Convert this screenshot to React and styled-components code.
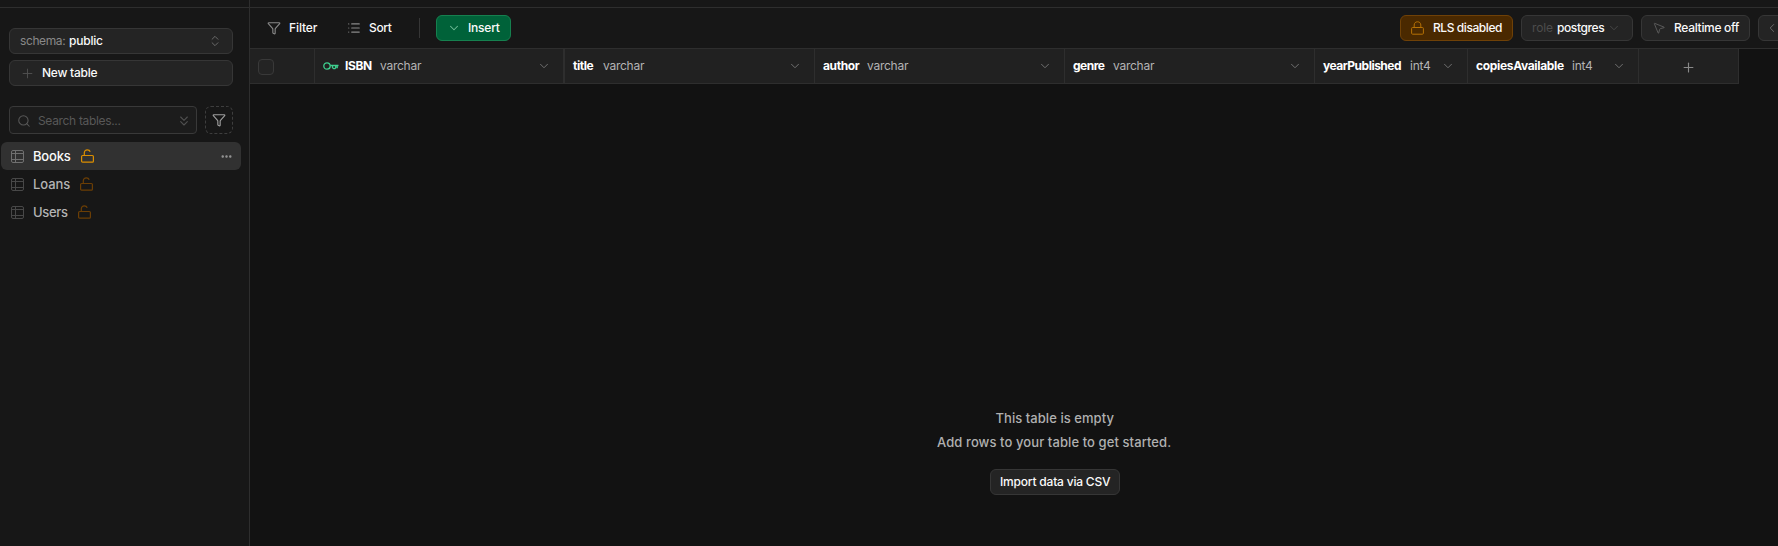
import React from 'react';
import styled, { createGlobalStyle } from 'styled-components';
import { Funnel, List, ChevronDown, ChevronsUpDown, ChevronsDown, Plus, Search, Ellipsis, MousePointer2, Code } from 'lucide-react';

const Global = createGlobalStyle`
  * { box-sizing: border-box; }
  body { margin: 0; background: #121212; overflow: hidden; }
  button { font: inherit; }
`;

const Page = styled.div`
  width: 100vw;
  height: 100vh;
  overflow: hidden;
  display: flex;
  flex-direction: column;
  background: #121212;
  color: #fafafa;
  font-family: Inter, "Liberation Sans", sans-serif;
  font-size: 12px;
  line-height: 16px;
`;

const TopEdge = styled.div`
  flex: none;
  height: 8px;
  background: #171717;
  border-bottom: 1px solid #2e2e2e;
  display: flex;
`;

const TopEdgeSidebar = styled.div`
  width: 250px;
  border-right: 1px solid #2e2e2e;
`;

const Body = styled.div`
  flex: 1;
  display: flex;
  min-height: 0;
`;

const Sidebar = styled.aside`
  flex: none;
  width: 250px;
  background: #171717;
  border-right: 1px solid #2e2e2e;
  padding-top: 20px;
`;

const Controls = styled.div`
  display: flex;
  flex-direction: column;
  gap: 6px;
  width: 224px;
  margin-left: 9px;
`;

const Label = styled.span`
  display: inline-block;
  flex: none;
  width: ${p => p.$w}px;
  white-space: nowrap;
  font-size: ${p => p.$size || 12}px;
  font-weight: ${p => p.$weight || 500};
  letter-spacing: ${p => p.$ls || 0}px;
  color: ${p => p.$color || '#fafafa'};
`;

const tones = {
  plain: ['#242424', '#363636'],
  green: ['#006239', '#16804f'],
  amber: ['#4a2900', '#6f4107'],
};

const Button = styled.button`
  display: flex;
  align-items: center;
  flex: none;
  width: ${p => (p.$w ? `${p.$w}px` : '100%')};
  height: 26px;
  padding: 0 0 0 ${p => p.$pad ?? 10}px;
  border: 1px solid ${p => tones[p.$tone || 'plain'][1]};
  border-radius: 6px;
  background: ${p => tones[p.$tone || 'plain'][0]};
  text-align: left;
  svg { flex: none; }
`;

const Gap = styled.span`
  flex: none;
  width: ${p => p.$w}px;
`;

const Spacer = styled.span`
  flex: 1;
`;

const SearchRow = styled.div`
  display: flex;
  gap: 8px;
  margin: 20px 0 8px 9px;
`;

const SearchBox = styled.div`
  display: flex;
  align-items: center;
  width: 188px;
  height: 28px;
  padding: 1px 4px 0 7px;
  border: 1px solid #393939;
  border-radius: 4px;
  background: #1c1c1c;
`;

const FilterTables = styled.button`
  display: grid;
  place-items: center;
  width: 28px;
  height: 28px;
  padding: 0;
  border: 1px dashed #3e3e3e;
  border-radius: 6px;
  background: transparent;
`;

const TableRow = styled.div`
  display: flex;
  align-items: center;
  width: 240px;
  height: 28px;
  margin-left: 1px;
  padding: 0 8px 0 10px;
  border-radius: 6px;
  background: ${p => (p.$active ? '#313131' : 'transparent')};
`;

const Main = styled.main`
  flex: none;
  width: 1610px;
  display: flex;
  flex-direction: column;
`;

const Toolbar = styled.div`
  flex: none;
  display: flex;
  align-items: center;
  height: 41px;
  padding: 0 10px 1px 17px;
  background: #171717;
  border-bottom: 1px solid #2e2e2e;
`;

const Tool = styled.div`
  display: flex;
  align-items: center;
  gap: 8px;
`;

const Divider = styled.i`
  width: 1px;
  height: 20px;
  background: #363636;
  margin: 0 16px 0 28px;
`;

const Actions = styled.div`
  display: flex;
  gap: 8px;
`;

const HeaderRow = styled.div`
  flex: none;
  display: flex;
  height: 35px;
`;

const Cell = styled.div`
  display: flex;
  align-items: center;
  width: ${p => p.$w}px;
  padding: 0 ${p => p.$right ?? 12}px 0 8px;
  background: #212121;
  border-right: ${p => (p.$edge || 1)}px solid #2e2e2e;
  border-bottom: 1px solid #2e2e2e;
  svg { flex: none; }
`;

const PlusCell = styled(Cell)`
  justify-content: center;
  padding: 3px 0 0;
`;

const Checkbox = styled.span`
  width: 16px;
  height: 16px;
  margin-top: 1px;
  border: 1px solid #393939;
  border-radius: 4px;
  background: #242424;
`;

const Empty = styled.section`
  flex: 1;
  display: flex;
  flex-direction: column;
  align-items: center;
  padding-top: 322px;
`;

const Message = styled.div`
  height: 24px;
  display: flex;
  align-items: center;
`;

const EmptyAction = styled.div`
  margin-top: 15px;
`;

const TableIcon = ({ color }) => (
  <svg width="13" height="13" viewBox="0 0 13 13" fill="none" stroke={color}>
    <rect x=".5" y=".5" width="12" height="12" rx="1.5" />
    <path d="M.5 3.5h12M.5 9.5h12M4.5.5v12" />
  </svg>
);

const OpenLock = ({ color }) => (
  <svg width="13" height="14" viewBox="0 0 13 14" fill="none" stroke={color} strokeWidth="1.2" strokeLinejoin="round">
    <rect x=".6" y="6.5" width="11.8" height="6.7" rx="1" />
    <path d="M3.3 6.5V3.8C3.3 1.9 4.6.8 6.3.8c1.5 0 2.5.7 2.9 2" />
  </svg>
);

const ClosedLock = () => (
  <svg width="13" height="14" viewBox="0 0 13 14" fill="none" stroke="#b57105" strokeLinejoin="round">
    <rect x=".6" y="6.5" width="11.8" height="6.7" rx="1" />
    <path d="M3.2 6.5V4C3.2 2 4.6.8 6.5.8S9.8 2 9.8 4v2.5" />
  </svg>
);

const KeyIcon = () => (
  <svg width="16" height="8" viewBox="0 0 16 8" fill="none" stroke="#3ecf8e" strokeWidth="1.3">
    <circle cx="4" cy="4" r="3.2" />
    <path d="M7.3 3.5h8.2M14.2 3.5v2.8M9.5 3.5v2.2l1.2 1h1.2l.8-1V3.5" />
  </svg>
);

const tables = [
  { name: 'Books', w: 38, ls: -0.2, active: true },
  { name: 'Loans', w: 37, ls: -0.1 },
  { name: 'Users', w: 35, ls: -0.35 },
];

const columns = [
  { name: 'ISBN', nw: 27, nls: -0.4, type: 'varchar', w: 250, edge: 2, primary: true },
  { name: 'title', nw: 22, nls: -0.45, type: 'varchar', w: 250 },
  { name: 'author', nw: 36, nls: -0.4, type: 'varchar', w: 250 },
  { name: 'genre', nw: 32, nls: -0.5, type: 'varchar', w: 250 },
  { name: 'yearPublished', nw: 79, nls: -0.5, type: 'int4', w: 153 },
  { name: 'copiesAvailable', nw: 88, nls: -0.33, type: 'int4', w: 171 },
];

export default function App() {
  return (
    <Page>
      <Global />
      <TopEdge><TopEdgeSidebar /></TopEdge>
      <Body>
        <Sidebar>
          <Controls>
            <Button>
              <Label $w={49} $weight={400} $color="#898989" $ls={-0.4}>schema:</Label>
              <Label $w={36} $ls={-0.2}>public</Label>
              <Spacer />
              <ChevronsUpDown size={14} strokeWidth={1.7} color="#6a6a6a" />
              <Gap $w={10} />
            </Button>
            <Button>
              <Plus size={15} strokeWidth={1.5} color="#505050" />
              <Gap $w={7} />
              <Label $w={56} $ls={-0.25}>New table</Label>
            </Button>
          </Controls>
          <SearchRow>
            <SearchBox>
              <Search size={14} strokeWidth={1.8} color="#585858" />
              <Gap $w={7} />
              <Label $w={84} $weight={400} $color="#585858" $ls={-0.33}>Search tables...</Label>
              <Spacer />
              <ChevronsDown size={16} strokeWidth={1.6} color="#505050" />
            </SearchBox>
            <FilterTables><Funnel size={14} strokeWidth={1.9} color="#a0a0a0" /></FilterTables>
          </SearchRow>
          {tables.map(t => (
            <TableRow key={t.name} $active={t.active}>
              <TableIcon color={t.active ? '#707070' : '#484848'} />
              <Gap $w={9} />
              <Label $w={t.w} $size={13} $ls={t.ls} $color={t.active ? '#fafafa' : '#b4b4b4'}>{t.name}</Label>
              <Gap $w={10} />
              <OpenLock color={t.active ? '#db8e00' : '#6b3e05'} />
              <Spacer />
              {t.active && <Ellipsis size={13} strokeWidth={2.5} color="#9a9a9a" />}
            </TableRow>
          ))}
        </Sidebar>
        <Main>
          <Toolbar>
            <Tool>
              <Funnel size={14} strokeWidth={1.9} color="#898989" />
              <Label $w={28} $ls={-0.1}>Filter</Label>
            </Tool>
            <Gap $w={30} />
            <Tool>
              <List size={14} strokeWidth={1.9} color="#898989" />
              <Label $w={22} $ls={-0.35}>Sort</Label>
            </Tool>
            <Divider />
            <Button $w={75} $tone="green">
              <ChevronDown size={14} strokeWidth={1.8} color="#6fbd97" />
              <Gap $w={7} />
              <Label $w={31} $ls={-0.2}>Insert</Label>
            </Button>
            <Spacer />
            <Actions>
              <Button $w={113} $tone="amber">
                <ClosedLock />
                <Gap $w={9} />
                <Label $w={69} $ls={-0.42}>RLS disabled</Label>
              </Button>
              <Button $w={112}>
                <Label $w={25} $weight={400} $color="#4d4d4d" $ls={-0.1}>role</Label>
                <Label $w={49} $ls={-0.4}>postgres</Label>
                <Gap $w={1} />
                <ChevronDown size={14} strokeWidth={1.3} color="#505050" />
              </Button>
              <Button $w={109}>
                <MousePointer2 size={14} strokeWidth={1.5} color="#606060" />
                <Gap $w={8} />
                <Label $w={65} $ls={-0.3}>Realtime off</Label>
              </Button>
              <Button $w={92}>
                <Code size={14} strokeWidth={1.5} color="#707070" />
              </Button>
            </Actions>
          </Toolbar>
          <HeaderRow>
            <Cell $w={65}><Checkbox /></Cell>
            {columns.map(c => (
              <Cell key={c.name} $w={c.w} $edge={c.edge}>
                {c.primary && <><KeyIcon /><Gap $w={6} /></>}
                <Label $w={c.nw} $weight={700} $ls={c.nls} $color="#fff">{c.name}</Label>
                <Gap $w={8} />
                <Label $w={c.type === 'int4' ? 22 : 41} $weight={400} $color="#b4b4b4" $ls={-0.25}>{c.type}</Label>
                <Spacer />
                <ChevronDown size={14} strokeWidth={1.7} color="#707070" />
              </Cell>
            ))}
            <PlusCell $w={100}><Plus size={15} strokeWidth={1.8} color="#898989" /></PlusCell>
          </HeaderRow>
          <Empty>
            <Message><Label $w={119} $size={13} $color="#b0b0b0" $ls={0.05}>This table is empty</Label></Message>
            <Message><Label $w={236} $size={13} $color="#b0b0b0" $ls={0.09}>Add rows to your table to get started.</Label></Message>
            <EmptyAction><Button $w={130} $pad={9}><Label $w={110} $ls={-0.2}>Import data via CSV</Label></Button></EmptyAction>
          </Empty>
        </Main>
      </Body>
    </Page>
  );
}
